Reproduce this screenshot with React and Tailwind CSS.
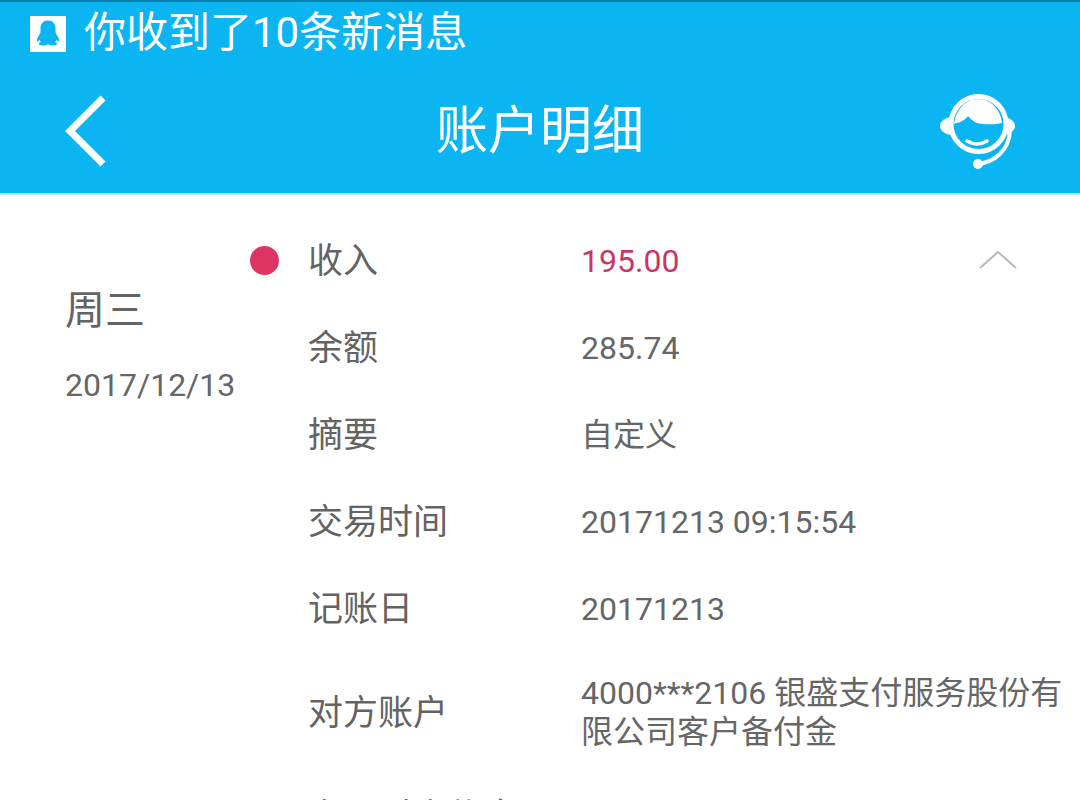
const CJK = "font-['Roboto','Noto_Sans_CJK_SC',sans-serif]";

function Row({ label, value, valueClass = "text-[#666666]", className = "h-[87px]", leading = "leading-[40px]", mark, chevron }) {
  return (
    <div className={`flex items-center ${className}`}>
      <div className="relative mt-[2px] w-[273px] shrink-0 text-[35px] leading-[40px] text-[#636363]">
        {mark && <span className="absolute left-[-58px] top-[4px] h-[29px] w-[29px] rounded-full bg-[#dc3564]" />}
        {label}
      </div>
      <div className={`w-[490px] shrink-0 text-[32px] ${leading} ${valueClass}`}>{value}</div>
      {chevron && (
        <svg width="38" height="20" viewBox="0 0 38 20" className="ml-[-92px] mt-[-2px]" fill="none" stroke="#b9b9b9" strokeWidth="2">
          <path d="M1 18 L19 2 L37 18" />
        </svg>
      )}
    </div>
  );
}

export default function App() {
  return (
    <div className={`flex h-[800px] w-[1080px] flex-col overflow-hidden bg-white ${CJK}`}>
      <header className="h-[195px] shrink-0 border-t-2 border-b-2 border-t-[#0a7fae] border-b-[#b5e6f8] bg-[#0bb5f2] text-white">
        <div className="flex h-[62px] items-center pl-[30px]">
          <svg width="36" height="36" viewBox="0 0 36 36" className="mt-[2px]">
            <rect width="36" height="36" rx="1" fill="#fff" />
            <path fill="#0bb5f2" d="M18 4.500c-5 0-7.500 3.500-7.500 8v3c0 1.500-1 3-2 4.500-1 1.500-1.700 3.500-1.500 5 .3.800 1.300.300 2.500-1 .5.900 1 1.500 1.500 2-1.500.500-2.200 1.200-2 2.300.3 1.400 4.300 1.400 6.500.9.900-.2 1.500-.6 2.500-.6s1.600.4 2.500.6c2.200.5 6.200.5 6.500-.9.200-1.100-.5-1.800-2-2.300.5-.5 1-1.100 1.500-2 1.200 1.300 2.200 1.800 2.500 1 .2-1.500-.5-3.500-1.500-5-1-1.500-2-3-2-4.500v-3c0-4.500-2.500-8-7.500-8z" />
          </svg>
          <span className="ml-[18px] text-[42px] leading-[50px]">你收到了10条新消息</span>
        </div>
        <div className="grid h-[129px] grid-cols-[1fr_auto_1fr] items-center pl-[65px] pr-[65px] pt-[4px]">
          <svg width="42" height="72" viewBox="0 0 42 72" fill="none" stroke="#fff" strokeWidth="7">
            <path d="M38 3 L5 36 L38 69" />
          </svg>
          <h1 className="mt-[3px] text-[52px] font-normal leading-[60px]">账户明细</h1>
          <svg width="78" height="78" viewBox="0 0 78 78" fill="none" className="justify-self-end mr-[-2px] mt-[-1px]">
            <circle cx="39.500" cy="33" r="27.500" stroke="#fff" strokeWidth="5" />
            <path fill="#fff" d="M15 32.700 C21 32 26 29 29 25 C33 30 38 33 44 33 C50 33.500 57 33.500 63 32 C62 19 52 8 39.500 8 C26 8 17 19 15 32.700z" />
            <path d="M28 50 Q38 56 48 50" stroke="#fff" strokeWidth="3.500" strokeLinecap="round" />
            <path fill="#fff" d="M12 26 C5 27 1 31 1 35 C1 39 5 43 12 44z" />
            <path fill="#fff" d="M67 26 C72 28 76 31 76 35 C76 39 72 42 68 44z" />
            <path d="M71 40 C70 60 55 71 39 73" stroke="#fff" strokeWidth="4" strokeLinecap="round" />
            <circle cx="39" cy="73" r="5" fill="#fff" />
          </svg>
        </div>
      </header>
      <main className="flex flex-1 items-start overflow-hidden">
        <div className="w-[308px] shrink-0 pl-[65px] pt-[93px]">
          <div className="text-[40px] leading-[46px] text-[#636363]">周三</div>
          <div className="mt-[31px] text-[32px] leading-[40px] text-[#666666]">2017/12/13</div>
        </div>
        <div className="pt-[22px]">
          <Row mark chevron label="收入" value="195.00" valueClass="text-[#cc3366]" />
          <Row label="余额" value="285.74" />
          <Row label="摘要" value="自定义" />
          <Row label="交易时间" value="20171213 09:15:54" />
          <Row label="记账日" value="20171213" />
          <Row
            label="对方账户"
            className="h-[121px]"
            leading="leading-[39px]"
            value={<span className="mt-[1px] block w-[490px]">4000***2106 银盛支付服务股份有限公司客户备付金</span>}
          />
          <Row label="交易对方信息" />
        </div>
      </main>
    </div>
  );
}
